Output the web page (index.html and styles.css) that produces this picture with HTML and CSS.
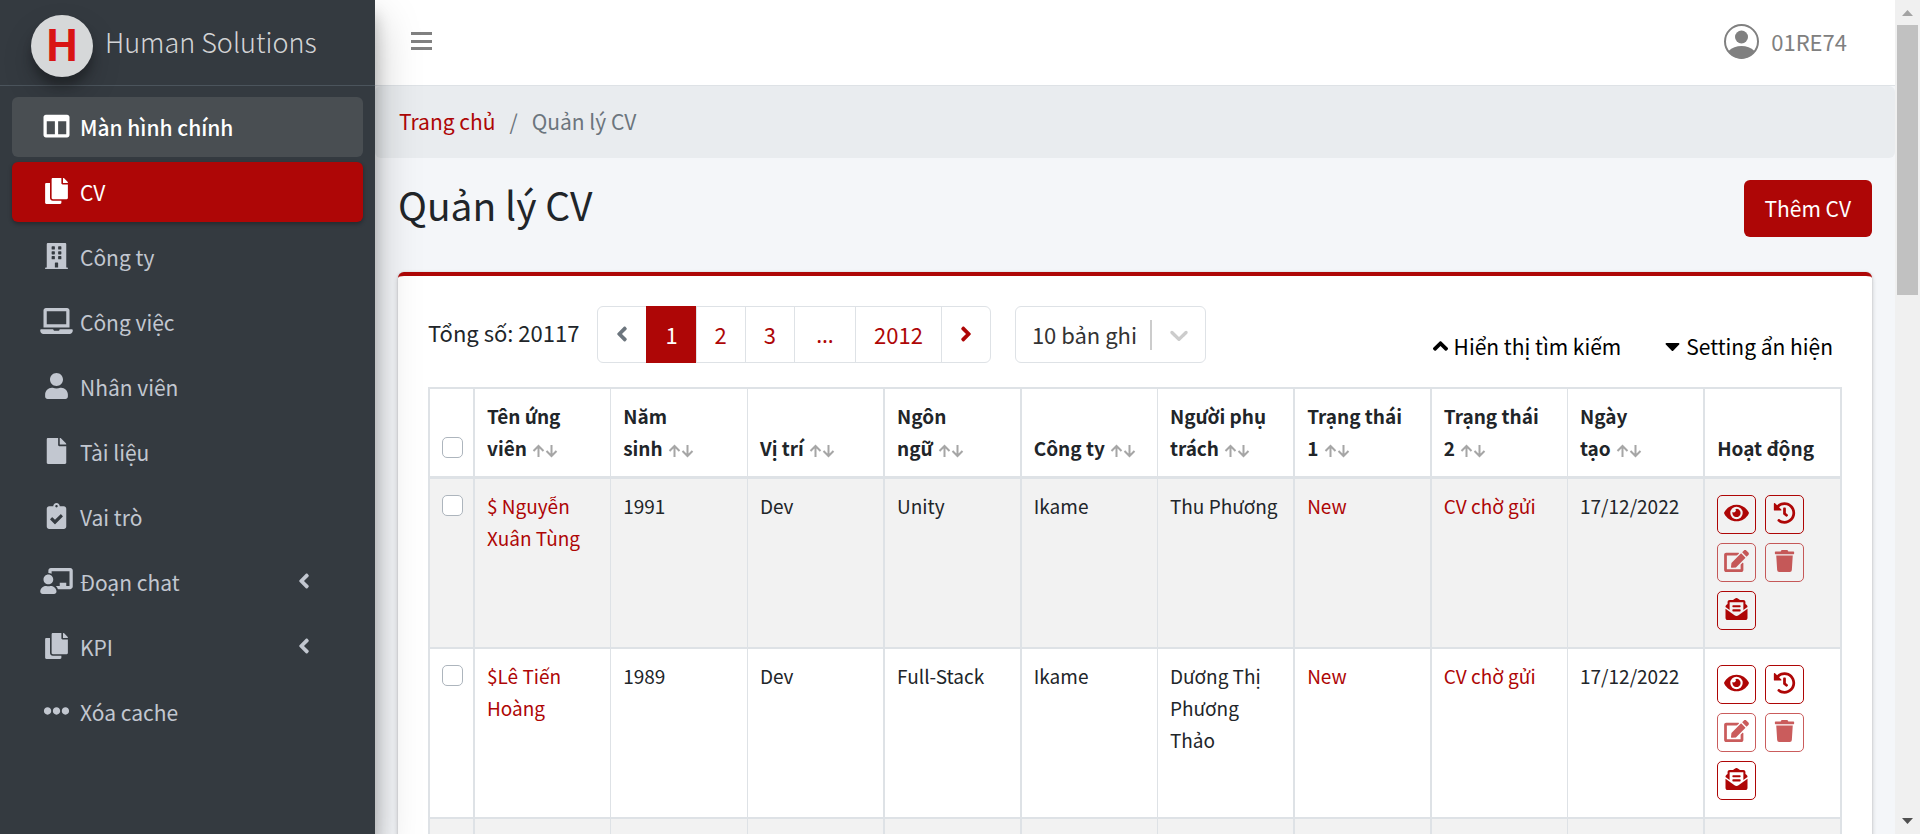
FILE: index.html
```html
<!DOCTYPE html>
<html lang="vi">
<head>
<meta charset="utf-8">
<title>Quản lý CV</title>
<meta name="viewport" content="width=device-width, initial-scale=1">
<link rel="stylesheet" href="styles.css">
</head>
<body>
<svg class="sprite" aria-hidden="true">
  <symbol id="columns" viewBox="0 0 512 512"><path d="M464 32H48C21.49 32 0 53.49 0 80v352c0 26.51 21.49 48 48 48h416c26.51 0 48-21.49 48-48V80c0-26.51-21.49-48-48-48zM224 416H64V160h160v256zm224 0H288V160h160v256z"/></symbol>
  <symbol id="copy" viewBox="0 0 448 512"><path d="M320 448v40c0 13.255-10.745 24-24 24H24c-13.255 0-24-10.745-24-24V120c0-13.255 10.745-24 24-24h72v296c0 30.879 25.121 56 56 56h168zm0-344V0H152c-13.255 0-24 10.745-24 24v368c0 13.255 10.745 24 24 24h272c13.255 0 24-10.745 24-24V128H344c-13.2 0-24-10.8-24-24zm120.971-31.029L375.029 7.029A24 24 0 0 0 358.059 0H352v96h96v-6.059a24 24 0 0 0-7.029-16.97z"/></symbol>
  <symbol id="building" viewBox="0 0 448 512"><path d="M436 480h-20V24c0-13.255-10.745-24-24-24H56C42.745 0 32 10.745 32 24v456H12c-6.627 0-12 5.373-12 12v20h448v-20c0-6.627-5.373-12-12-12zM128 76c0-6.627 5.373-12 12-12h40c6.627 0 12 5.373 12 12v40c0 6.627-5.373 12-12 12h-40c-6.627 0-12-5.373-12-12V76zm0 96c0-6.627 5.373-12 12-12h40c6.627 0 12 5.373 12 12v40c0 6.627-5.373 12-12 12h-40c-6.627 0-12-5.373-12-12v-40zm52 148h-40c-6.627 0-12-5.373-12-12v-40c0-6.627 5.373-12 12-12h40c6.627 0 12 5.373 12 12v40c0 6.627-5.373 12-12 12zm76 160h-64v-84c0-6.627 5.373-12 12-12h40c6.627 0 12 5.373 12 12v84zm64-172c0 6.627-5.373 12-12 12h-40c-6.627 0-12-5.373-12-12v-40c0-6.627 5.373-12 12-12h40c6.627 0 12 5.373 12 12v40zm0-96c0 6.627-5.373 12-12 12h-40c-6.627 0-12-5.373-12-12v-40c0-6.627 5.373-12 12-12h40c6.627 0 12 5.373 12 12v40zm0-96c0 6.627-5.373 12-12 12h-40c-6.627 0-12-5.373-12-12V76c0-6.627 5.373-12 12-12h40c6.627 0 12 5.373 12 12v40z"/></symbol>
  <symbol id="laptop" viewBox="0 0 640 512"><path d="M624 416H381.54c-.74 19.81-14.71 32-32.74 32H288c-18.69 0-33.02-17.47-32.77-32H16c-8.8 0-16 7.2-16 16v16c0 35.2 28.8 64 64 64h512c35.2 0 64-28.8 64-64v-16c0-8.8-7.2-16-16-16zM576 48c0-26.4-21.6-48-48-48H112C85.6 0 64 21.6 64 48v336h512V48zm-64 272H128V64h384v256z"/></symbol>
  <symbol id="user" viewBox="0 0 448 512"><path d="M224 256c70.7 0 128-57.3 128-128S294.7 0 224 0 96 57.3 96 128s57.3 128 128 128zm89.6 32h-16.7c-22.2 10.2-46.9 16-72.9 16s-50.6-5.8-72.9-16h-16.7C60.2 288 0 348.2 0 422.4V464c0 26.5 21.5 48 48 48h352c26.5 0 48-21.5 48-48v-41.6c0-74.2-60.2-134.4-134.4-134.4z"/></symbol>
  <symbol id="file" viewBox="0 0 384 512"><path d="M224 136V0H24C10.7 0 0 10.7 0 24v464c0 13.3 10.7 24 24 24h336c13.3 0 24-10.7 24-24V160H248c-13.2 0-24-10.8-24-24zm160-14.1v6.1H256V0h6.1c6.4 0 12.5 2.5 17 7l97.9 98c4.5 4.5 7 10.6 7 16.9z"/></symbol>
  <symbol id="clipboard" viewBox="0 0 384 512"><path d="M336 64h-80c0-35.3-28.7-64-64-64s-64 28.7-64 64H48C21.5 64 0 85.5 0 112v352c0 26.5 21.5 48 48 48h288c26.5 0 48-21.5 48-48V112c0-26.5-21.5-48-48-48zM192 40c13.3 0 24 10.7 24 24s-10.7 24-24 24-24-10.7-24-24 10.7-24 24-24zm121.2 231.8l-143 141.8c-4.7 4.7-12.3 4.6-17-.1l-82.6-83.3c-4.7-4.7-4.6-12.3.1-17L99.1 285c4.7-4.7 12.3-4.6 17 .1l46 46.4 106-105.2c4.7-4.7 12.3-4.6 17 .1l28.2 28.4c4.7 4.8 4.6 12.3-.1 17z"/></symbol>
  <symbol id="teacher" viewBox="0 0 640 512"><path d="M208 352c-2.39 0-4.78.35-7.06 1.09C187.98 357.3 174.35 360 160 360c-14.35 0-27.98-2.7-40.95-6.91-2.28-.74-4.66-1.09-7.05-1.09C49.94 352-.33 402.48 0 464.62.14 490.88 21.73 512 48 512h224c26.27 0 47.86-21.12 48-47.38.33-62.14-49.94-112.62-112-112.62zm-48-32c53.02 0 96-42.98 96-96s-42.98-96-96-96-96 42.98-96 96 42.98 96 96 96zM592 0H208c-26.47 0-48 22.25-48 49.59V96c23.42 0 45.1 6.78 64 17.8V64h352v288h-64v-64H384v64h-76.24c19.1 16.69 33.12 38.73 39.69 64H592c26.47 0 48-22.25 48-49.59V49.59C640 22.25 618.47 0 592 0z"/></symbol>
  <symbol id="dots" viewBox="0 0 512 512"><path d="M328 256c0 39.8-32.2 72-72 72s-72-32.2-72-72 32.2-72 72-72 72 32.2 72 72zm104-72c-39.8 0-72 32.2-72 72s32.2 72 72 72 72-32.2 72-72-32.2-72-72-72zm-352 0c-39.8 0-72 32.2-72 72s32.2 72 72 72 72-32.2 72-72-32.2-72-72-72z"/></symbol>
  <symbol id="left" viewBox="0 0 256 512"><path d="M31.7 239l136-136c9.4-9.4 24.6-9.4 33.9 0l22.6 22.6c9.4 9.4 9.4 24.6 0 33.9L127.9 256l96.4 96.4c9.4 9.4 9.4 24.6 0 33.9L201.7 409c-9.4 9.4-24.6 9.4-33.9 0l-136-136c-9.5-9.4-9.5-24.6-.1-34z"/></symbol>
  <symbol id="right" viewBox="0 0 256 512"><path transform="matrix(-1 0 0 1 256 0)" d="M31.7 239l136-136c9.4-9.4 24.6-9.4 33.9 0l22.6 22.6c9.4 9.4 9.4 24.6 0 33.9L127.9 256l96.4 96.4c9.4 9.4 9.4 24.6 0 33.9L201.7 409c-9.4 9.4-24.6 9.4-33.9 0l-136-136c-9.5-9.4-9.5-24.6-.1-34z"/></symbol>
  <symbol id="up" viewBox="0 0 320 512"><path d="M177 159.7l136 136c9.4 9.4 9.4 24.6 0 33.9l-22.6 22.6c-9.4 9.4-24.6 9.4-33.9 0L160 255.9l-96.4 96.4c-9.4 9.4-24.6 9.4-33.9 0L7 329.7c-9.4-9.4-9.4-24.6 0-33.9l136-136c9.4-9.5 24.6-9.5 34-.1z"/></symbol>
  <symbol id="caret" viewBox="0 0 320 512"><path d="M31.3 192h257.3c17.8 0 26.7 21.5 14.1 34.1L174.1 354.8c-7.8 7.8-20.5 7.8-28.3 0L17.2 226.1C4.6 213.5 13.5 192 31.3 192z"/></symbol>
  <symbol id="eye" viewBox="0 0 576 512"><path d="M572.52 241.4C518.29 135.59 410.93 64 288 64S57.68 135.64 3.48 241.41a32.35 32.35 0 0 0 0 29.19C57.71 376.41 165.07 448 288 448s230.32-71.64 284.52-177.41a32.35 32.35 0 0 0 0-29.19zM288 400a144 144 0 1 1 144-144 143.93 143.93 0 0 1-144 144zm0-240a95.31 95.31 0 0 0-25.31 3.79 47.85 47.85 0 0 1-66.9 66.9A95.78 95.78 0 1 0 288 160z"/></symbol>
  <symbol id="history" viewBox="0 0 512 512"><path d="M504 255.531c.253 136.64-111.18 248.372-247.82 248.468-59.015.042-113.223-20.53-155.822-54.911-11.077-8.94-11.905-25.541-1.839-35.607l11.267-11.267c8.609-8.609 22.353-9.551 31.891-1.984C173.062 425.135 212.781 440 256 440c101.705 0 184-82.311 184-184 0-101.705-82.311-184-184-184-48.814 0-93.149 18.969-126.068 49.932l50.754 50.754c10.08 10.08 2.941 27.314-11.313 27.314H24c-8.837 0-16-7.163-16-16V38.627c0-14.254 17.234-21.393 27.314-11.314l49.372 49.372C129.209 34.136 189.552 8 256 8c136.81 0 247.747 110.78 248 247.531zm-180.912 78.784l9.823-12.63c8.138-10.463 6.253-25.542-4.21-33.679L288 256.349V152c0-13.255-10.745-24-24-24h-16c-13.255 0-24 10.745-24 24v135.651l65.409 50.874c10.463 8.137 25.541 6.253 33.679-4.21z"/></symbol>
  <symbol id="edit" viewBox="0 0 576 512"><path d="M402.6 83.2l90.2 90.2c3.8 3.8 3.8 10 0 13.8L274.4 405.6l-92.8 10.3c-12.4 1.4-22.9-9.1-21.5-21.5l10.3-92.8L388.8 83.2c3.8-3.8 10-3.8 13.8 0zm162-22.9l-48.8-48.8c-15.2-15.2-39.9-15.2-55.2 0l-35.4 35.4c-3.8 3.8-3.8 10 0 13.8l90.2 90.2c3.8 3.8 10 3.8 13.8 0l35.4-35.4c15.2-15.3 15.2-40 0-55.2zM384 346.2V448H64V128h229.8c3.2 0 6.2-1.3 8.5-3.5l40-40c7.6-7.6 2.2-20.5-8.5-20.5H48C21.5 64 0 85.5 0 112v352c0 26.5 21.5 48 48 48h352c26.5 0 48-21.5 48-48V306.2c0-10.7-12.9-16-20.5-8.5l-40 40c-2.2 2.3-3.5 5.3-3.5 8.5z"/></symbol>
  <symbol id="trash" viewBox="0 0 448 512"><path d="M432 32H312l-9.4-18.7A24 24 0 0 0 281.1 0H166.8a23.72 23.72 0 0 0-21.4 13.3L136 32H16A16 16 0 0 0 0 48v32a16 16 0 0 0 16 16h416a16 16 0 0 0 16-16V48a16 16 0 0 0-16-16zM53.2 467a48 48 0 0 0 47.9 45h245.8a48 48 0 0 0 47.9-45L416 128H32z"/></symbol>
  <symbol id="mail" viewBox="0 0 512 512"><path d="M176 216h160c8.84 0 16-7.16 16-16v-16c0-8.84-7.16-16-16-16H176c-8.84 0-16 7.16-16 16v16c0 8.84 7.16 16 16 16zm-16 80c0 8.84 7.16 16 16 16h160c8.84 0 16-7.16 16-16v-16c0-8.84-7.16-16-16-16H176c-8.84 0-16 7.16-16 16v16zm96 121.13c-16.42 0-32.84-5.06-46.86-15.19L0 250.86V464c0 26.51 21.49 48 48 48h416c26.51 0 48-21.49 48-48V250.86L302.86 401.94c-14.02 10.12-30.44 15.19-46.86 15.19zm237.61-254.18c-8.85-6.94-17.24-13.47-29.61-22.81V96c0-26.51-21.49-48-48-48h-77.55c-3.04-2.2-5.87-4.26-9.04-6.56C312.6 29.17 279.2-.35 256 0c-23.2-.35-56.59 29.17-73.41 41.44-3.17 2.3-6 4.36-9.04 6.56H96c-26.51 0-48 21.49-48 48v44.14c-12.37 9.33-20.76 15.87-29.61 22.81A47.995 47.995 0 0 0 0 200.72v10.65l96 69.35V96h320v184.72l96-69.35v-10.65c0-14.74-6.78-28.67-18.39-37.77z"/></symbol>
  <symbol id="sort" viewBox="0 0 26 14"><path fill="none" stroke="currentColor" stroke-width="2" d="M6.500 13V2.500M1.500 7l5-5 5 5M19.500 1v10.500M14.500 7l5 5 5-5"/></symbol>
  <symbol id="chevron" viewBox="0 0 20 20"><path d="M4.516 7.548c0.436-0.446 1.043-0.481 1.576 0l3.908 3.747 3.908-3.747c0.533-0.481 1.141-0.446 1.574 0 0.436 0.445 0.408 1.197 0 1.615-0.406 0.418-4.695 4.502-4.695 4.502-0.217 0.223-0.502 0.335-0.787 0.335s-0.570-0.112-0.789-0.335c0 0-4.287-4.084-4.695-4.502s-0.436-1.170 0-1.615z"/></symbol>
</svg>

<div class="app">
  <aside class="sidebar">
    <a class="brand" href="#"><span class="logo">H</span><span>Human Solutions</span></a>
    <nav class="menu">
      <a class="item current" href="#"><svg><use href="#columns"/></svg><span>Màn hình chính</span></a>
      <a class="item active" href="#"><svg><use href="#copy"/></svg><span>CV</span></a>
      <a class="item" href="#"><svg><use href="#building"/></svg><span>Công ty</span></a>
      <a class="item" href="#"><svg><use href="#laptop"/></svg><span>Công việc</span></a>
      <a class="item" href="#"><svg><use href="#user"/></svg><span>Nhân viên</span></a>
      <a class="item" href="#"><svg><use href="#file"/></svg><span>Tài liệu</span></a>
      <a class="item" href="#"><svg><use href="#clipboard"/></svg><span>Vai trò</span></a>
      <a class="item" href="#"><svg><use href="#teacher"/></svg><span>Đoạn chat</span><svg class="arrow"><use href="#left"/></svg></a>
      <a class="item" href="#"><svg><use href="#copy"/></svg><span>KPI</span><svg class="arrow"><use href="#left"/></svg></a>
      <a class="item" href="#"><svg><use href="#dots"/></svg><span>Xóa cache</span></a>
    </nav>
  </aside>

  <div class="page">
    <header class="topbar">
      <button class="burger" type="button" aria-label="Menu"><svg viewBox="0 0 21 18"><path d="M0 0h21v3H0zM0 8h21v3H0zM0 15h21v3H0z"/></svg></button>
      <a class="account" href="#">
        <svg viewBox="0 0 35 35"><circle cx="17.500" cy="17.500" r="16.500" fill="none" stroke="currentColor" stroke-width="2"/><circle cx="17.500" cy="13" r="6.500"/><path d="M4.500 27C8 23.500 12.500 22 17.500 22s9.500 1.500 13 5c-3 5-8 7.500-13 7.500S7.500 32 4.500 27z"/></svg>
        <span>01RE74</span>
      </a>
    </header>

    <nav class="breadcrumb" aria-label="Breadcrumb"><a href="#">Trang chủ</a><span>/</span><span>Quản lý CV</span></nav>

    <main class="content">
      <div class="heading"><h1>Quản lý CV</h1><button class="primary" type="button">Thêm CV</button></div>

      <section class="card">
        <div class="tools">
          <span class="total">Tổng số: 20117</span>
          <nav class="pager" aria-label="Phân trang">
            <a class="prev" href="#" aria-label="Trang trước"><svg><use href="#left"/></svg></a>
            <a class="on" href="#">1</a><a href="#">2</a><a href="#">3</a><a class="more" href="#">…</a><a href="#">2012</a>
            <a href="#" aria-label="Trang sau"><svg><use href="#right"/></svg></a>
          </nav>
          <div class="select">
            <select aria-label="Số bản ghi"><option>10 bản ghi</option></select>
            <span class="indicator"><svg><use href="#chevron"/></svg></span>
          </div>
          <div class="toggles">
            <button type="button"><svg><use href="#up"/></svg>Hiển thị tìm kiếm</button>
            <button type="button"><svg><use href="#caret"/></svg>Setting ẩn hiện</button>
          </div>
        </div>

        <table>
          <thead>
            <tr>
              <th class="check"><input type="checkbox" aria-label="Chọn tất cả"></th>
              <th>Tên ứng<br>viên <svg class="sort"><use href="#sort"/></svg></th>
              <th>Năm<br>sinh <svg class="sort"><use href="#sort"/></svg></th>
              <th>Vị trí <svg class="sort"><use href="#sort"/></svg></th>
              <th>Ngôn<br>ngữ <svg class="sort"><use href="#sort"/></svg></th>
              <th>Công ty <svg class="sort"><use href="#sort"/></svg></th>
              <th>Người phụ trách <svg class="sort"><use href="#sort"/></svg></th>
              <th>Trạng thái<br>1 <svg class="sort"><use href="#sort"/></svg></th>
              <th>Trạng thái<br>2 <svg class="sort"><use href="#sort"/></svg></th>
              <th>Ngày<br>tạo <svg class="sort"><use href="#sort"/></svg></th>
              <th>Hoạt động</th>
            </tr>
          </thead>
          <tbody>
            <tr>
              <td class="check"><input type="checkbox" aria-label="Chọn Nguyễn Xuân Tùng"></td>
              <td><a href="#">$ Nguyễn Xuân Tùng</a></td><td>1991</td><td>Dev</td><td>Unity</td><td>Ikame</td><td>Thu Phương</td>
              <td><a href="#">New</a></td><td><a href="#">CV chờ gửi</a></td><td>17/12/2022</td>
              <td><div class="actions">
                <button type="button" aria-label="Xem"><svg><use href="#eye"/></svg></button>
                <button type="button" aria-label="Lịch sử"><svg><use href="#history"/></svg></button>
                <button type="button" aria-label="Sửa" disabled><svg><use href="#edit"/></svg></button>
                <button type="button" aria-label="Xóa" disabled><svg><use href="#trash"/></svg></button>
                <button type="button" aria-label="Gửi thư"><svg><use href="#mail"/></svg></button>
              </div></td>
            </tr>
            <tr>
              <td class="check"><input type="checkbox" aria-label="Chọn Lê Tiến Hoàng"></td>
              <td><a href="#">$Lê Tiến Hoàng</a></td><td>1989</td><td>Dev</td><td>Full-Stack</td><td>Ikame</td><td>Dương Thị Phương Thảo</td>
              <td><a href="#">New</a></td><td><a href="#">CV chờ gửi</a></td><td>17/12/2022</td>
              <td><div class="actions">
                <button type="button" aria-label="Xem"><svg><use href="#eye"/></svg></button>
                <button type="button" aria-label="Lịch sử"><svg><use href="#history"/></svg></button>
                <button type="button" aria-label="Sửa" disabled><svg><use href="#edit"/></svg></button>
                <button type="button" aria-label="Xóa" disabled><svg><use href="#trash"/></svg></button>
                <button type="button" aria-label="Gửi thư"><svg><use href="#mail"/></svg></button>
              </div></td>
            </tr>
            <tr class="next"><td></td><td></td><td></td><td></td><td></td><td></td><td></td><td></td><td></td><td></td><td></td></tr>
          </tbody>
        </table>
      </section>
    </main>
  </div>

  <div class="scrollbar" aria-hidden="true">
    <svg viewBox="0 0 25 25"><path fill="#a3a3a3" d="M7 16l5.500-6 5.500 6z"/></svg>
    <span class="thumb"></span>
    <svg class="down" viewBox="0 0 25 25"><path fill="#505050" d="M7 9h11l-5.500 6z"/></svg>
  </div>
</div>
</body>
</html>
```
FILE: styles.css
```css
* { box-sizing: border-box; }
body {
  margin: 0;
  font-family: "Noto Sans CJK SC", "Noto Sans", sans-serif;
  font-size: 21px;
  line-height: 36px;
  color: #212529;
  background: #f4f6f9;
}
a { color: #ae0606; text-decoration: none; }
button, select { font: inherit; cursor: pointer; }
svg { display: block; fill: currentColor; flex: none; }
.sprite { position: absolute; width: 0; height: 0; }

.app { display: flex; height: 100vh; overflow: hidden; }

/* Sidebar */
.sidebar {
  position: relative;
  z-index: 2;
  flex: none;
  width: 375px;
  background: #343a40;
  box-shadow: 0 21px 42px rgba(0, 0, 0, .25), 0 15px 15px rgba(0, 0, 0, .22);
}
.brand {
  display: flex;
  align-items: center;
  gap: 12px;
  height: 86px;
  padding: 0 31px 2px;
  border-bottom: 1px solid #4b545c;
  color: rgba(255, 255, 255, .8);
  font-size: 27px;
  font-weight: 300;
}
.logo {
  display: grid;
  place-items: center;
  width: 62px;
  height: 62px;
  margin-top: 9px;
  border-radius: 50%;
  background: #d6d8d9;
  color: #d91414;
  font: bold 44px/62px Roboto, sans-serif;
  box-shadow: 0 15px 30px rgba(0, 0, 0, .19), 0 9px 9px rgba(0, 0, 0, .23);
}
.menu { display: flex; flex-direction: column; gap: 5px; padding: 11px 12px; }
.item {
  display: flex;
  align-items: center;
  gap: 7px;
  height: 60px;
  padding: 0 53px 0 28px;
  border-radius: 6px;
  color: #c2c7d0;
}
.item span { padding-bottom: 1px; }
.item svg { width: 33px; height: 26px; margin-bottom: 3px; }
.item .arrow { width: 12px; height: 24px; margin-left: auto; }
.current { background: #494e52; color: #fff; font-weight: 500; }
.active { background: #ae0606; color: #fff; box-shadow: 0 2px 4px rgba(0, 0, 0, .3); }

/* Top bar */
.page { flex: 1; min-width: 0; }
.topbar {
  display: flex;
  align-items: center;
  justify-content: space-between;
  height: 86px;
  padding: 0 48px 3px 36px;
  background: #fff;
  border-bottom: 1px solid #dee2e6;
}
.burger { padding: 0; border: 0; background: none; color: #808080; }
.burger svg { width: 21px; height: 18px; }
.account { display: flex; align-items: center; gap: 12px; color: #808080; font-size: 22px; }
.account svg { width: 35px; height: 35px; }

.breadcrumb {
  display: flex;
  gap: 14px;
  padding: 17px 24px 19px;
  border-radius: 6px;
  background: #e9ecef;
  color: #6c757d;
}

/* Content */
.content { padding: 22px 23px 0; }
.heading { display: flex; justify-content: space-between; height: 92px; }
h1 { margin: 0; font-size: 39px; font-weight: 400; line-height: 48px; }
.primary {
  height: 57px;
  padding: 0 21px 2px;
  border: 0;
  border-radius: 6px;
  background: #ae0606;
  color: #fff;
}
.card {
  padding: 30px;
  border-top: 4px solid #ae0606;
  border-radius: 6px;
  background: #fff;
  box-shadow: 0 0 2px rgba(0, 0, 0, .13), 0 2px 5px rgba(0, 0, 0, .2);
}
.tools { display: flex; align-items: flex-start; margin-bottom: 23px; }
.total { margin: 8px 18px 0 0; font-size: 22px; }
.pager {
  display: flex;
  height: 57px;
  border: 1px solid #dee2e6;
  border-radius: 6px;
  font-size: 22px;
}
.pager a {
  display: grid;
  place-items: center;
  padding: 0 18px 2px;
  border-left: 1px solid #dee2e6;
}
.pager a:first-child { border-left: 0; }
.pager svg { width: 12px; height: 24px; }
.pager .prev { color: #6c757d; }
.pager .on { margin: -1px 0; background: #ae0606; border-color: #ae0606; color: #fff; }
.pager .more { min-width: 61px; font-family: "Noto Sans", sans-serif; }
.select { position: relative; width: 191px; margin-left: 24px; }
select {
  width: 100%;
  height: 57px;
  padding: 0 16px 2px;
  appearance: none;
  border: 1px solid #dee2e6;
  border-radius: 6px;
  background: #fff;
  color: #333;
  font-size: 22px;
}
.indicator {
  position: absolute;
  top: 14px;
  right: 12px;
  padding-left: 12px;
  border-left: 2px solid #ccc;
  color: #ccc;
  pointer-events: none;
}
.indicator svg { width: 30px; height: 30px; }
.toggles { display: flex; gap: 44px; margin: 22px 9px 0 auto; }
.toggles button {
  display: flex;
  align-items: center;
  gap: 6px;
  padding: 0;
  border: 0;
  background: none;
  color: #000;
}
.toggles svg { width: 15px; height: 24px; }

/* Table */
table {
  width: 100%;
  table-layout: fixed;
  border-collapse: collapse;
  font-size: 19px;
  line-height: 32px;
  border: 2px solid #dee2e6;
}
th, td {
  padding: 11px 12px 12px;
  border-left: 1px solid #dee2e6;
  border-bottom: 2px solid #dee2e6;
  text-align: left;
  vertical-align: top;
}
th { vertical-align: bottom; border-bottom-width: 3px; }
th:nth-child(2), th:nth-child(5), th:nth-child(6), th:nth-child(8), th:nth-child(9), th:nth-child(11),
td:nth-child(2), td:nth-child(5), td:nth-child(6), td:nth-child(8), td:nth-child(9), td:nth-child(11) {
  border-left-width: 2px;
}
th:last-child { padding-right: 0; }
tbody tr:nth-child(odd) { background: #f2f2f2; }
.check { width: 45px; padding-right: 0; }
.next td { height: 168px; }
input {
  display: block;
  width: 21px;
  height: 21px;
  margin: 5px 0 6px;
  appearance: none;
  border: 1px solid #adb5bd;
  border-radius: 5px;
  background: #fff;
}
.sort { display: inline-block; width: 26px; height: 14px; margin-left: 1px; color: #a6a6a6; vertical-align: -2px; }
.actions { display: flex; flex-wrap: wrap; gap: 9px; padding: 5px 0; }
.actions button {
  display: grid;
  place-items: center;
  width: 39px;
  height: 39px;
  padding: 0 0 4px;
  border: 1px solid #ae0606;
  border-radius: 5px;
  background: none;
  color: #ae0606;
}
.actions button:disabled { opacity: .65; }
.actions svg { width: 25px; height: 22px; }

/* Scroll track */
.scrollbar { display: flex; flex-direction: column; flex: none; width: 25px; background: #f0f0f0; }
.scrollbar svg { width: 25px; height: 25px; }
.thumb { height: 270px; margin: 0 2px; background: #c1c1c1; }
.down { margin-top: auto; }
```
